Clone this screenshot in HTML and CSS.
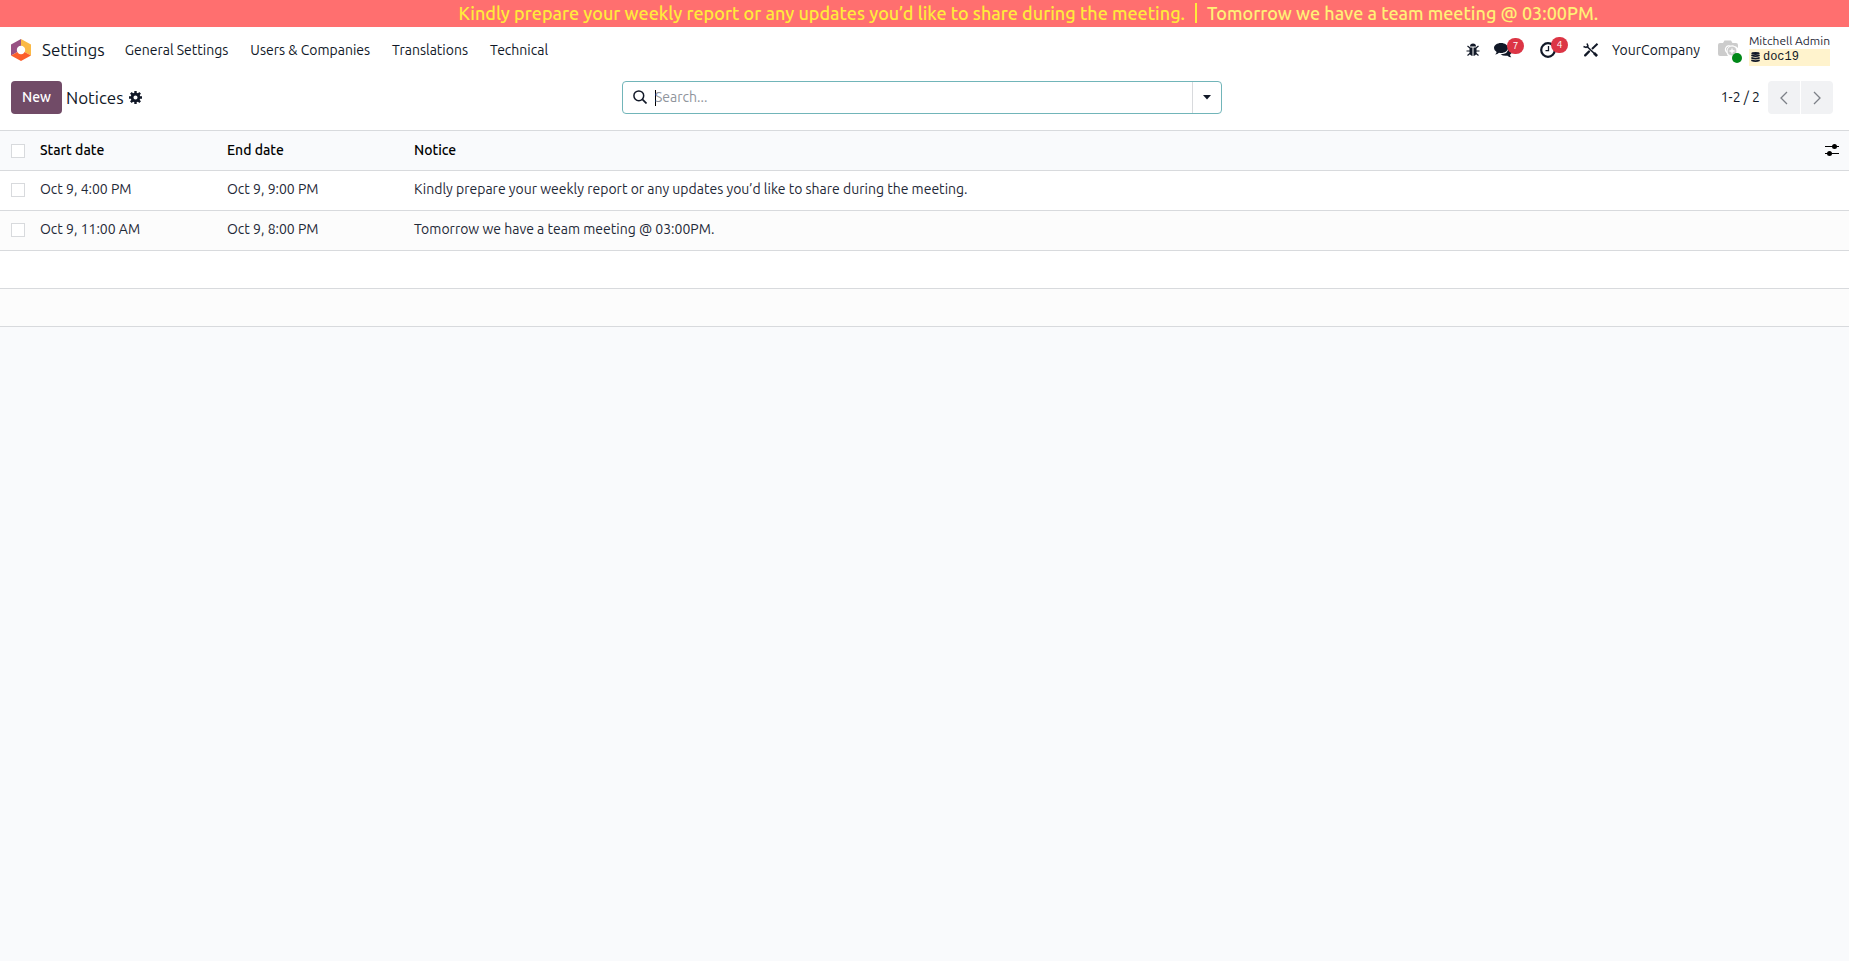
FILE: index.html
```html
<!DOCTYPE html>
<html lang="en">
<head>
    <meta charset="UTF-8">
    <meta name="viewport" content="width=device-width, initial-scale=1.0">
    <title>Notices</title>
    <link rel="stylesheet" href="styles.css">
</head>
<body>
    <!-- Notice banner -->
    <div class="notice-bar">
        <span class="notice-item">Kindly prepare your weekly report or any updates you’d like to share during the meeting.</span>
        <span class="notice-item notice-second">Tomorrow we have a team meeting @ 03:00PM.</span>
    </div>

    <!-- Main menu -->
    <header class="navbar">
        <a href="#" class="brand">
            <svg class="brand-logo" viewBox="0 0 20 22">
                <path d="M10 0 0 5.500V16.500L10 11Z" fill="#985184"/>
                <path d="M10 0 20 5.500V16.500L10 11Z" fill="#fbb945"/>
                <path d="M0 16.500 10 11 20 16.500 10 22Z" fill="#fc5f2b"/>
                <circle cx="10" cy="11" r="4.200" fill="#fff"/>
            </svg>
            Settings
        </a>
        <nav class="menu">
            <a href="#">General Settings</a>
            <a href="#">Users &amp; Companies</a>
            <a href="#">Translations</a>
            <a href="#">Technical</a>
        </nav>
        <div class="systray">
            <button class="tray-btn" aria-label="Debug">
                <svg width="14" height="14" viewBox="0 0 14 14">
                    <path d="M4 3.500a3 3 0 0 1 6 0Z" fill="currentColor"/>
                    <path d="M3.500 4.500H6.500V13Q3.500 12.500 3.500 9ZM7.500 4.500H10.500V9Q10.500 12.500 7.500 13Z" fill="currentColor"/>
                    <path d="M1.500 3 4 5M12.500 3 10 5M.5 8H4M13.500 8H10M1.500 12.500 4.500 10M12.500 12.500 9.500 10" stroke="currentColor" stroke-width="1.200" fill="none"/>
                </svg>
            </button>
            <button class="tray-btn tray-chat" aria-label="Messages">
                <svg width="18" height="15" viewBox="0 0 18 15">
                    <path d="M7 0c4 0 7 2.300 7 5s-3 5-7 5q-1 0-2-.2Q3.500 11.300 1.200 11.500 2.500 10.300 2.600 9 0 7.500 0 5c0-2.700 3-5 7-5Z" fill="currentColor"/>
                    <path d="M15 4.500q3 1.300 3 4 0 2-2 3.300.1 1.300 1.300 2.500-2.300-.1-3.800-1.600-4 .7-7-1.500 7.500.2 8.500-6.700Z" fill="currentColor"/>
                </svg>
                <span class="badge">7</span>
            </button>
            <button class="tray-btn tray-clock" aria-label="Activities">
                <svg width="16" height="16" viewBox="0 0 16 16" fill="none" stroke="currentColor">
                    <circle cx="8" cy="8" r="6.800" stroke-width="2.200"/>
                    <path d="M8.500 4V8.700H5.500" stroke-width="1.300"/>
                </svg>
                <span class="badge">4</span>
            </button>
            <button class="tray-btn tray-tools" aria-label="Tools">
                <svg width="16" height="14" viewBox="0 0 16 14" fill="none" stroke="currentColor">
                    <path d="M4 3.500 14 13" stroke-width="1.600"/>
                    <path d="M2.200 12.300 6 8.500" stroke-width="2.400" stroke-linecap="round"/>
                    <path d="M9 6 14.500 .8" stroke-width="2"/>
                    <path d="M.5 3.500 3 4.500 5 3 4 .5" stroke-width="1.500"/>
                    <path d="M11 10 14 13" stroke-width="2.600"/>
                </svg>
            </button>
            <a href="#" class="company">YourCompany</a>
            <button class="user">
                <span class="avatar">
                    <svg width="24" height="20" viewBox="0 0 24 20">
                        <path d="M2 3H5L6.500.5H13L14.500 3H18Q20 3 20 5V8A5.500 5.500 0 0 0 10 16H2Q0 16 0 14V5Q0 3 2 3Z" fill="#ccc"/>
                        <path d="M9 12.500A3.600 3.600 0 1 1 13 6.500" fill="none" stroke="#fff" stroke-width="1.200"/>
                        <circle cx="14" cy="11" r="5" fill="#ccc" stroke="#fff"/>
                        <path d="M14 8.500V13.500M11.500 11H16.500" stroke="#fff" stroke-width="1.300"/>
                    </svg>
                    <span class="status"></span>
                </span>
                <span class="user-info">
                    <span class="user-name">Mitchell Admin</span>
                    <span class="user-db">
                        <svg width="9" height="10" viewBox="0 0 9 10" fill="none" stroke="currentColor">
                            <ellipse cx="4.500" cy="1.500" rx="4.200" ry="1.400" fill="currentColor" stroke="none"/>
                            <path d="M.3 3.300Q4.500 5 8.700 3.300M.3 5.800Q4.500 7.500 8.700 5.800M.3 8.300Q4.500 10 8.700 8.300" stroke-width="1.600"/>
                        </svg>
                        doc19
                    </span>
                </span>
            </button>
        </div>
    </header>

    <!-- Control panel -->
    <div class="control-panel">
        <div class="panel-left">
            <button class="btn-new">New</button>
            <h1 class="title">Notices</h1>
            <button class="gear" aria-label="Actions">
                <svg width="13" height="13" viewBox="0 0 14 14" fill="none" stroke="currentColor">
                    <circle cx="7" cy="7" r="3.700" stroke-width="3"/>
                    <path d="M7 0V3M7 11V14M0 7H3M11 7H14M2 2 4 4M10 10 12 12M12 2 10 4M4 10 2 12" stroke-width="2.600"/>
                </svg>
            </button>
        </div>
        <div class="search">
            <label class="search-icon" for="search" aria-label="Search">
                <svg width="14" height="14" viewBox="0 0 14 14" fill="none" stroke="currentColor">
                    <circle cx="5.800" cy="5.800" r="4.900" stroke-width="1.500"/>
                    <path d="M9.400 9.400 13.500 13.500" stroke-width="1.700"/>
                </svg>
            </label>
            <input type="text" id="search" class="search-input" placeholder="Search..." autofocus>
            <button class="search-toggle" aria-label="Filters">
                <svg width="8" height="5" viewBox="0 0 8 5"><path d="M0 0H8L4 4.500Z" fill="currentColor"/></svg>
            </button>
        </div>
        <div class="pager">
            <span class="pager-count">1-2 / 2</span>
            <button class="pager-btn pager-prev" aria-label="Previous">
                <svg width="8" height="14" viewBox="0 0 8 14"><path d="M7 1 1 7 7 13" fill="none" stroke="currentColor" stroke-width="1.300"/></svg>
            </button>
            <button class="pager-btn pager-next" aria-label="Next">
                <svg width="8" height="14" viewBox="0 0 8 14"><path d="M1 1 7 7 1 13" fill="none" stroke="currentColor" stroke-width="1.300"/></svg>
            </button>
        </div>
    </div>

    <!-- List view -->
    <table class="list">
        <thead>
            <tr>
                <th class="col-check"><input type="checkbox" aria-label="Select all"></th>
                <th class="col-date">Start date</th>
                <th class="col-date">End date</th>
                <th>Notice</th>
                <th class="col-options">
                    <button class="options" aria-label="Optional columns">
                        <svg width="14" height="12" viewBox="0 0 14 12">
                            <path d="M0 2.500H14M0 9.500H14" stroke="currentColor" stroke-width="1.200"/>
                            <circle cx="9.500" cy="2.500" r="2.500" fill="currentColor"/>
                            <circle cx="4.500" cy="9.500" r="2.500" fill="currentColor"/>
                        </svg>
                    </button>
                </th>
            </tr>
        </thead>
        <tbody>
            <tr>
                <td class="col-check"><input type="checkbox" aria-label="Select row"></td>
                <td>Oct 9, 4:00 PM</td>
                <td>Oct 9, 9:00 PM</td>
                <td colspan="2">Kindly prepare your weekly report or any updates you’d like to share during the meeting.</td>
            </tr>
            <tr>
                <td class="col-check"><input type="checkbox" aria-label="Select row"></td>
                <td>Oct 9, 11:00 AM</td>
                <td>Oct 9, 8:00 PM</td>
                <td colspan="2">Tomorrow we have a team meeting @ 03:00PM.</td>
            </tr>
            <tr class="empty"><td colspan="5"></td></tr>
            <tr class="empty"><td colspan="5"></td></tr>
        </tbody>
    </table>
</body>
</html>
```
FILE: styles.css
```css
:root {
    --text: #1f2937;
    --dark: #111827;
    --border: #d8dadd;
    --bg: #f9fafc;
    --primary: #714b67;
    --focus: #71b5b9;
}

* {
    box-sizing: border-box;
}

body {
    margin: 0;
    background: var(--bg);
    color: var(--dark);
    font-family: Ubuntu, "Open Sans", "Noto Sans", sans-serif;
    font-size: 14px;
    line-height: 20px;
}

a {
    color: inherit;
    text-decoration: none;
}

button {
    padding: 0;
    border: 0;
    background: none;
    color: inherit;
    font: inherit;
    cursor: pointer;
}

svg {
    display: block;
}

/* Notice banner */
.notice-bar {
    display: flex;
    align-items: center;
    height: 27px;
    padding: 0 0 2px 24.8%;
    background: #ff6f6f;
    color: #ffeb3b;
    font-size: 18px;
    font-weight: 500;
    white-space: nowrap;
    overflow: hidden;
}

.notice-second {
    margin-left: 10px;
    padding-left: 10px;
    border-left: 2px solid #ffeb3b;
    color: #fff176;
}

/* Main menu */
.navbar {
    display: flex;
    align-items: center;
    height: 46px;
    padding: 0 19px 0 11px;
    background: #fff;
}

.brand {
    display: flex;
    align-items: center;
    gap: 11px;
    font-size: 17px;
}

.brand-logo {
    width: 20px;
    height: 22px;
}

.menu {
    display: flex;
    gap: 22px;
    margin-left: 20px;
}

.systray {
    display: flex;
    align-items: center;
    margin-left: auto;
}

.tray-btn {
    position: relative;
}

.tray-chat {
    margin-left: 14px;
}

.tray-clock {
    margin-left: 28px;
}

.tray-tools {
    margin-left: 27px;
}

.badge {
    position: absolute;
    top: -5px;
    left: 11px;
    width: 17px;
    height: 16px;
    border-radius: 8px;
    background: #dc3545;
    color: #fff;
    font-size: 10px;
    line-height: 16px;
    text-align: center;
}

.tray-chat .badge {
    left: 13px;
}

.company {
    margin-left: 13px;
}

.user {
    display: flex;
    align-items: center;
    gap: 7px;
    margin-left: 18px;
    text-align: left;
}

.avatar {
    position: relative;
}

.status {
    position: absolute;
    right: 0;
    bottom: -3px;
    width: 10px;
    height: 10px;
    border-radius: 50%;
    background: #008818;
}

.user-info {
    display: flex;
    flex-direction: column;
}

.user-name {
    padding-bottom: 2px;
    color: var(--text);
    font-size: 12px;
    line-height: 12px;
}

.user-db {
    display: flex;
    align-items: center;
    gap: 3px;
    padding: 0 2px;
    background: #fff3cd;
    font-family: "Liberation Mono", monospace;
    font-size: 12px;
    line-height: 17px;
}

/* Control panel */
.control-panel {
    display: grid;
    grid-template-columns: 1fr 600px 1fr;
    align-items: center;
    height: 57px;
    padding: 0 16px 8px 11px;
    background: #fff;
}

.panel-left {
    display: flex;
    align-items: center;
}

.btn-new {
    width: 51px;
    height: 33px;
    padding-bottom: 2px;
    border-radius: 4px;
    background: var(--primary);
    color: #fff;
    font-weight: 500;
}

.title {
    margin: 0 5px 0 4px;
    font-size: 17px;
    font-weight: 400;
}

.search {
    display: flex;
    height: 33px;
    border: 1px solid var(--focus);
    border-radius: 4px;
}

.search-icon {
    display: flex;
    align-items: center;
    padding: 0 8px 2px 10px;
}

.search-input {
    flex: 1;
    min-width: 0;
    padding: 0 0 2px;
    border: 0;
    outline: 0;
    background: linear-gradient(#000, #000) 0 8px / 1px 16px no-repeat;
    color: var(--dark);
    font: inherit;
    caret-color: transparent;
}

.search-input::placeholder {
    color: #8f949c;
}

.search-toggle {
    display: flex;
    align-items: center;
    justify-content: center;
    width: 29px;
    border-left: 1px solid var(--border);
}

.pager {
    display: flex;
    align-items: center;
    justify-content: flex-end;
}

.pager-count {
    margin-right: 8px;
    padding-bottom: 2px;
}

.pager-btn {
    display: flex;
    align-items: center;
    justify-content: center;
    width: 32px;
    height: 33px;
    background: #f1f2f4;
    color: #7c8087;
}

.pager-prev {
    margin-right: 1px;
    border-radius: 4px 0 0 4px;
}

.pager-next {
    border-radius: 0 4px 4px 0;
}

/* List view */
.list {
    width: 100%;
    border-collapse: separate;
    border-spacing: 0;
    table-layout: fixed;
    background: #fff;
}

.list th,
.list td {
    height: 40px;
    padding: 0 0 4px;
    border-bottom: 1px solid var(--border);
    text-align: left;
}

.list th {
    height: 41px;
    padding-bottom: 2px;
    border-top: 1px solid var(--border);
    background: var(--bg);
    color: #000;
    font-weight: 500;
}

.list td {
    color: var(--text);
}

.list tbody tr:nth-child(even) td {
    background: #fcfcfc;
}

.list .empty td {
    height: 38px;
}

.list .col-check {
    width: 40px;
    padding: 0 0 1px 11px;
}

.list th.col-check {
    padding: 1px 0 0 11px;
}

.col-date {
    width: 187px;
}

.list .col-options {
    width: 40px;
    padding: 0 10px 2px 0;
}

.col-check input {
    display: block;
    width: 14px;
    height: 14px;
    margin: 0;
    border: 1px solid var(--border);
    background: #fff;
    appearance: none;
}

.options {
    display: block;
    margin-left: auto;
}
```
